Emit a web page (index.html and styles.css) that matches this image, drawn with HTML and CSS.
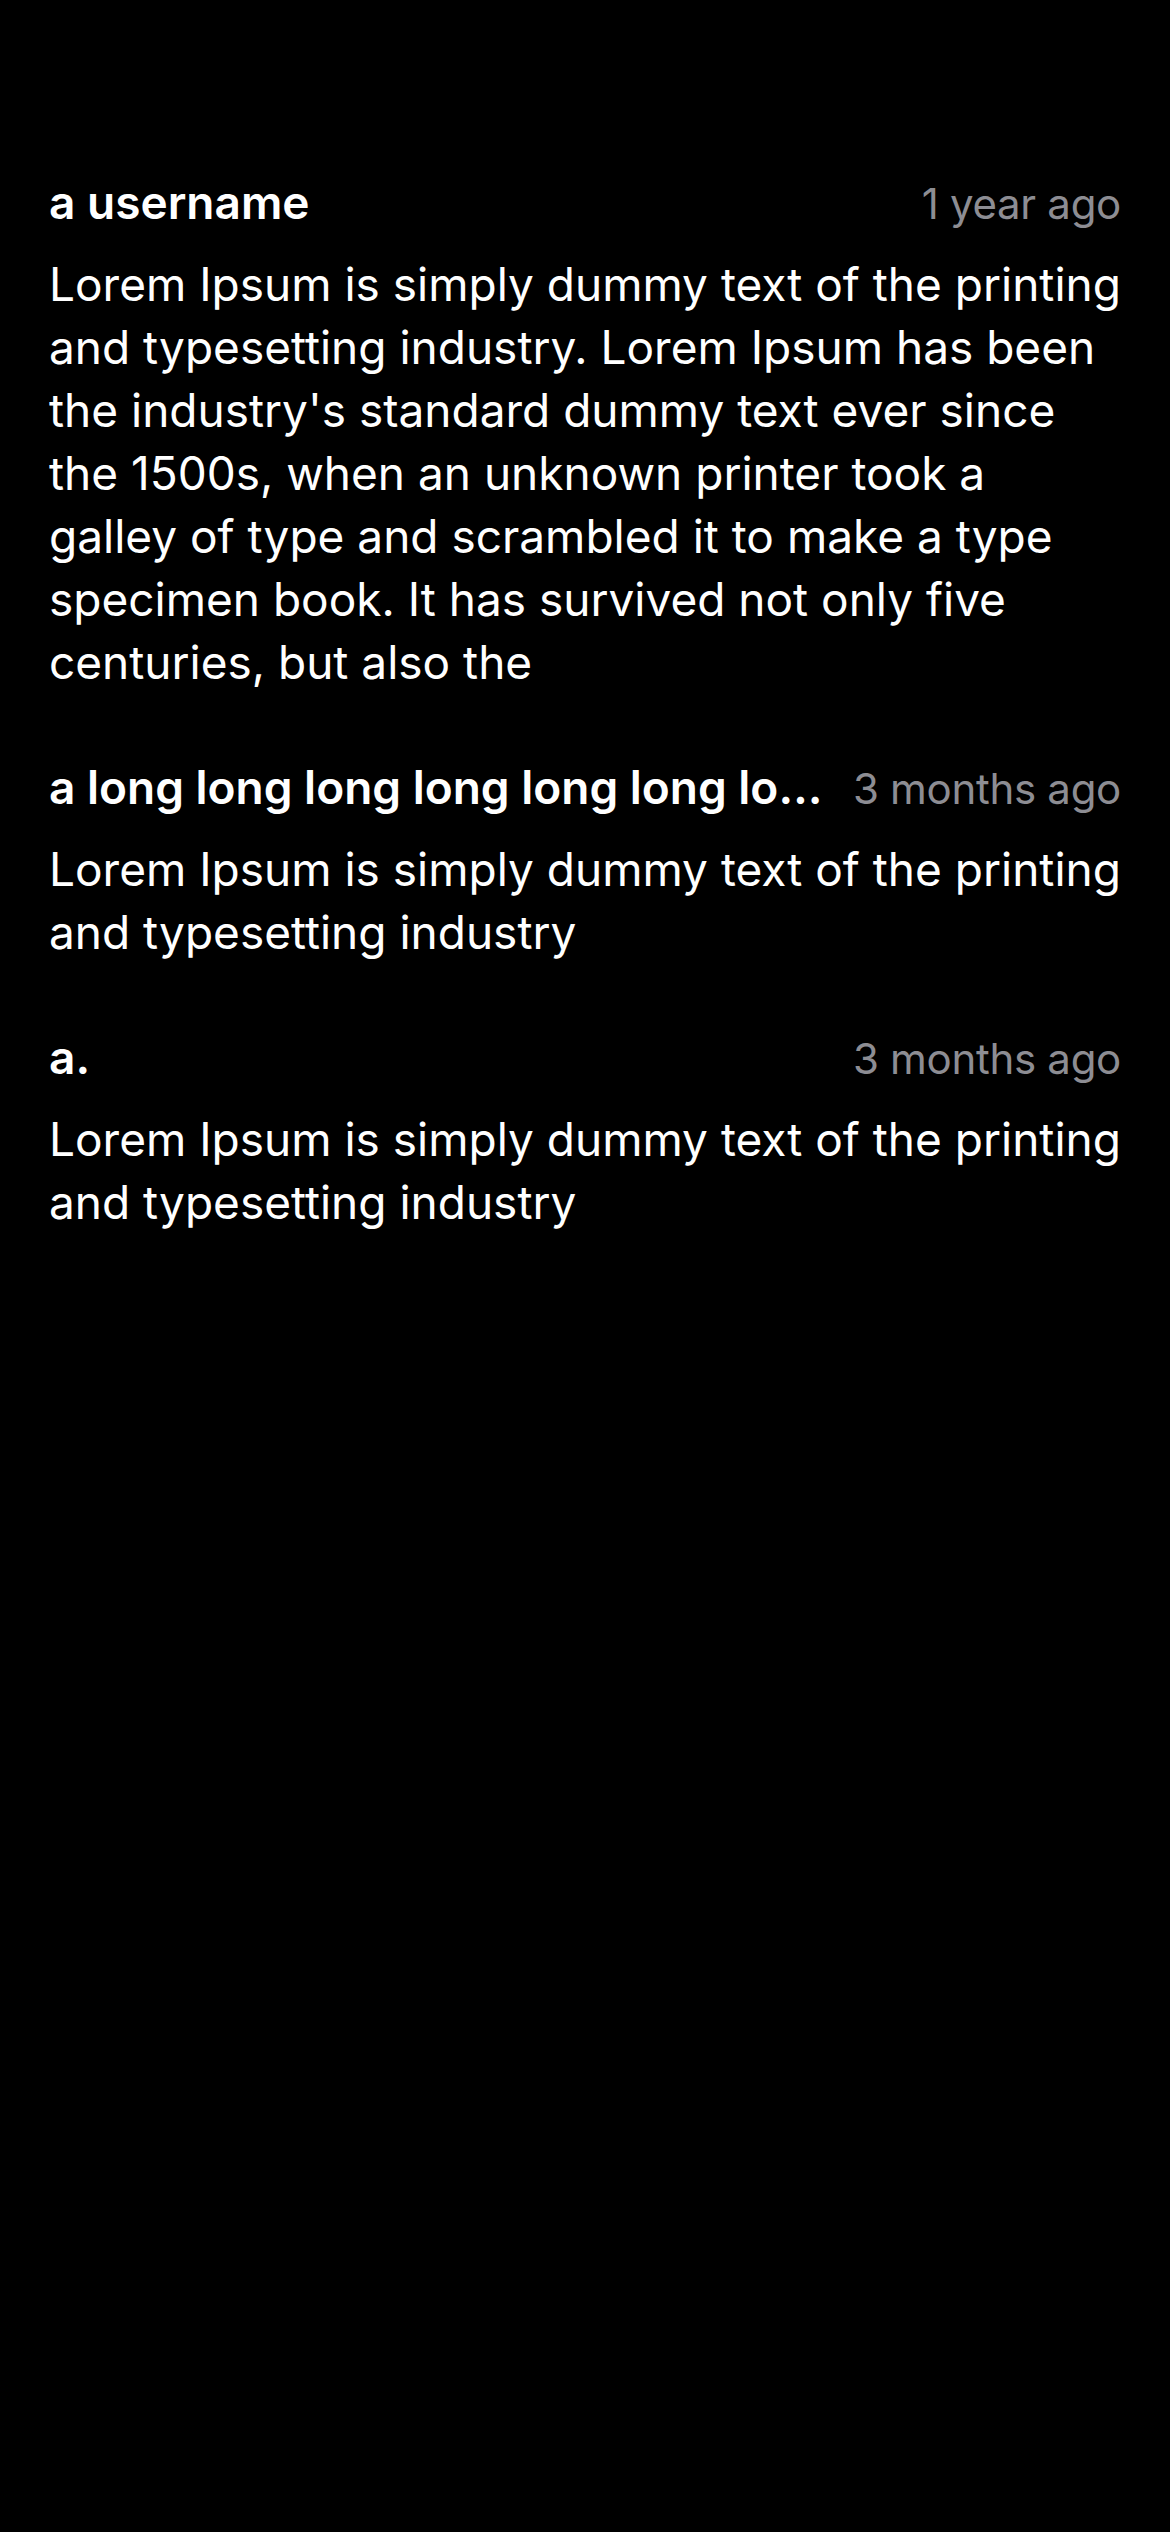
FILE: index.html
```html
<!DOCTYPE html>
<html lang="en">
<head>
<meta charset="utf-8">
<title>Comments</title>
<link rel="stylesheet" href="styles.css">
</head>
<body>
<main class="comments">
  <article class="comment">
    <header class="comment-head">
      <span class="author">a username</span>
      <span class="time">1 year ago</span>
    </header>
    <p class="text">Lorem Ipsum is simply dummy text of the printing and typesetting industry. Lorem Ipsum has been the industry's standard dummy text ever since the 1500s, when an unknown printer took a galley of type and scrambled it to make a type specimen book. It has survived not only five centuries, but also the</p>
  </article>
  <article class="comment">
    <header class="comment-head">
      <span class="author">a long long long long long long long long long username</span>
      <span class="time">3 months ago</span>
    </header>
    <p class="text">Lorem Ipsum is simply dummy text of the printing and typesetting industry</p>
  </article>
  <article class="comment">
    <header class="comment-head">
      <span class="author">a.</span>
      <span class="time">3 months ago</span>
    </header>
    <p class="text">Lorem Ipsum is simply dummy text of the printing and typesetting industry</p>
  </article>
</main>
</body>
</html>
```
FILE: styles.css
```css
html, body {
  margin: 0;
  padding: 0;
  background: #000;
}

body {
  font-family: Inter, "Noto Sans", "Liberation Sans", sans-serif;
  color: #fff;
  min-height: 2532px;
}

.comments {
  display: flex;
  flex-direction: column;
  gap: 63px;
  padding: 172px 49px 0 49px;
}

.comment {
  display: flex;
  flex-direction: column;
  gap: 21px;
}

.comment-head {
  display: flex;
  align-items: baseline;
  justify-content: space-between;
  gap: 24px;
  height: 60px;
  line-height: 60px;
}

.author {
  font-size: 46px;
  font-weight: 600;
  letter-spacing: 0;
  white-space: nowrap;
  overflow: hidden;
  text-overflow: ellipsis;
  min-width: 0;
}

.time {
  flex: none;
  font-size: 42px;
  color: #8d8d93;
  letter-spacing: -0.3px;
}

.text {
  margin: 0;
  font-size: 46px;
  line-height: 63px;
  letter-spacing: 0;
}
```
